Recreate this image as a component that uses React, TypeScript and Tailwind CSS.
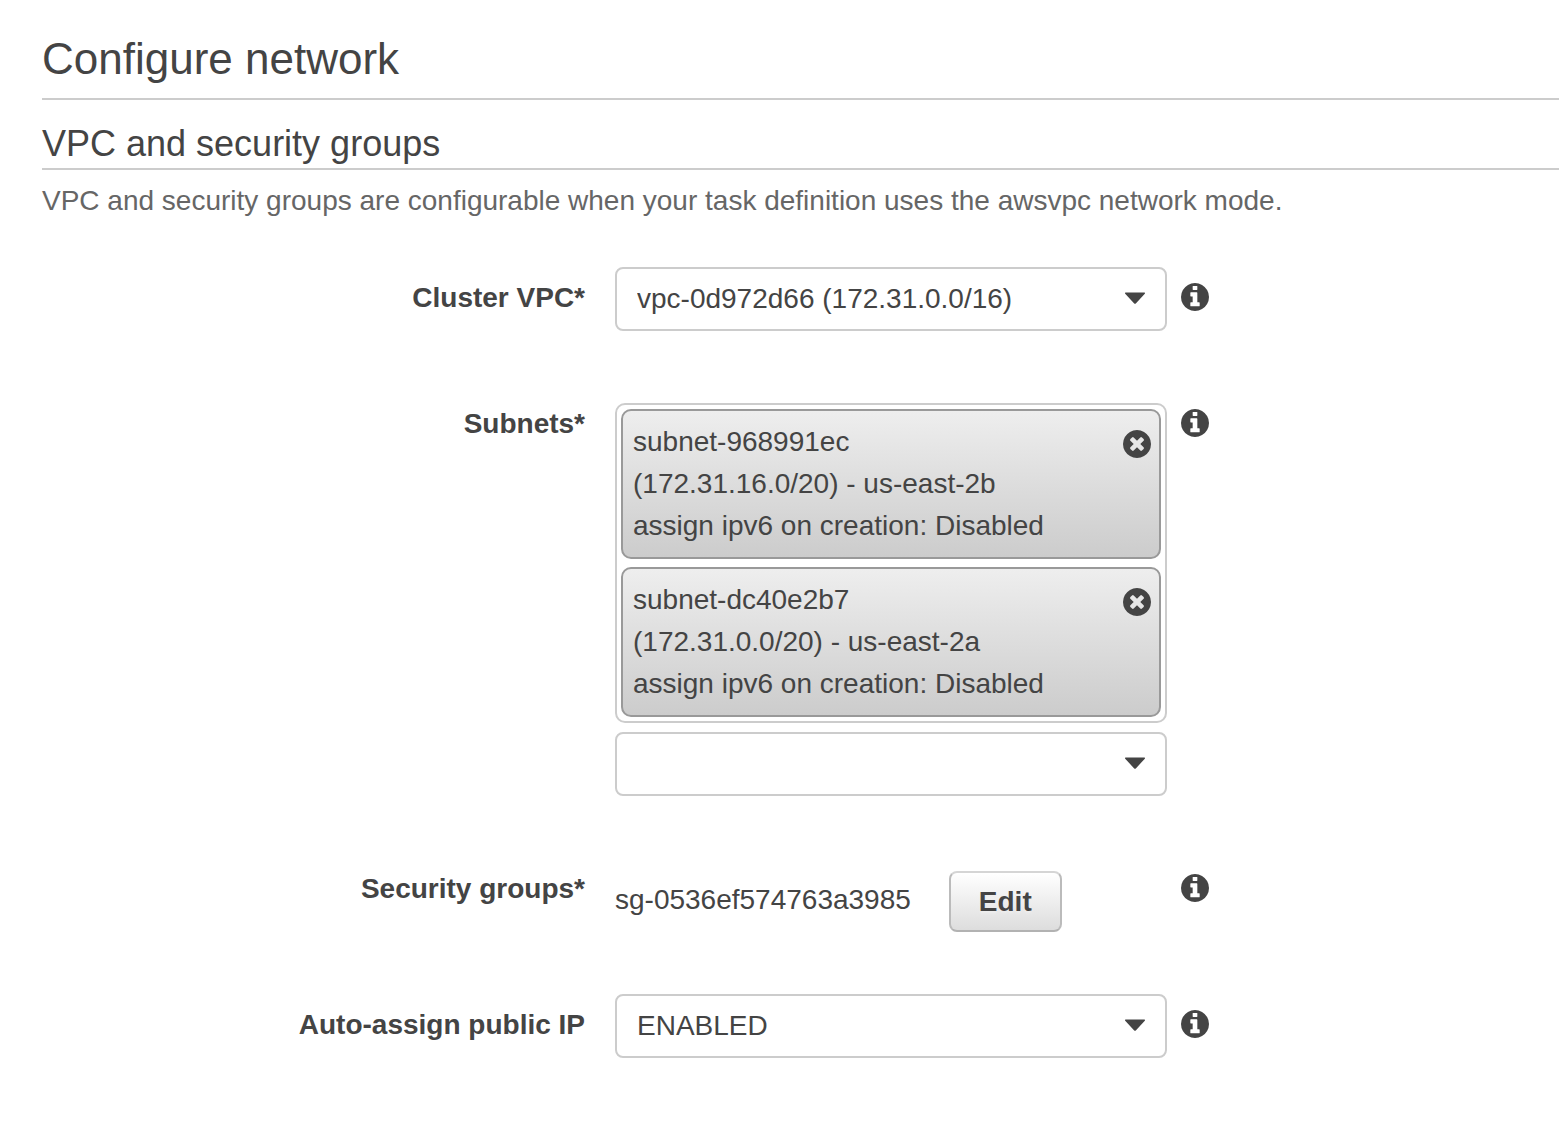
import { useState } from "react";
import type { ReactNode } from "react";

function InfoIcon() {
  return (
    <svg viewBox="128 128 1536 1536" className="block size-7" fill="currentColor" aria-hidden="true">
      <path d="M1152 1376v-160q0-14-9-23t-23-9h-96v-512q0-14-9-23t-23-9h-320q-14 0-23 9t-9 23v160q0 14 9 23t23 9h96v320h-96q-14 0-23 9t-9 23v160q0 14 9 23t23 9h448q14 0 23-9t9-23zm-128-896v-160q0-14-9-23t-23-9h-192q-14 0-23 9t-9 23v160q0 14 9 23t23 9h192q14 0 23-9t9-23zm640 416q0 209-103 385.5t-279.5 279.5-385.5 103-385.5-103-279.5-279.5-103-385.5 103-385.5 279.5-279.5 385.5-103 385.5 103 279.5 279.5 103 385.5z" />
    </svg>
  );
}

function RemoveIcon() {
  return (
    <svg viewBox="128 128 1536 1536" className="block size-7" fill="currentColor" aria-hidden="true">
      <path d="M1277 1122q0-26-19-45l-181-181 181-181q19-19 19-45 0-27-19-46l-90-90q-19-19-46-19-26 0-45 19l-181 181-181-181q-19-19-45-19-27 0-46 19l-90 90q-19 19-19 46 0 26 19 45l181 181-181 181q-19 19-19 45 0 27 19 46l90 90q19 19 46 19 26 0 45-19l181-181 181 181q19 19 45 19 27 0 46-19l90-90q19-19 19-46zm387-226q0 209-103 385.5t-279.5 279.5-385.5 103-385.5-103-279.5-279.5-103-385.5 103-385.5 279.5-279.5 385.5-103 385.5 103 279.5 279.5 103 385.5z" />
    </svg>
  );
}

function Select({ id, options }: { id: string; options: string[] }) {
  return (
    <div className="relative">
      <select
        id={id}
        className="block h-16 w-full appearance-none rounded-lg border-2 border-[#ccc] bg-white pr-14 pl-5 text-[28px] text-[#444]"
      >
        {options.map((o) => (
          <option key={o}>{o}</option>
        ))}
      </select>
      <svg
        viewBox="0 0 20 12"
        className="pointer-events-none absolute top-[25px] right-[22px] h-3 w-5"
        fill="currentColor"
        aria-hidden="true"
      >
        <path d="M.6 .4h18.8q1 .2 .4 1.3l-9 9.8q-.8 .6-1.6 0l-9-9.8q-.6-1.1 .4-1.3z" />
      </svg>
    </div>
  );
}

function Row({ label, htmlFor, children }: { label: string; htmlFor: string; children: ReactNode }) {
  return (
    <div className="grid grid-cols-[559fr_552fr_378fr] items-start gap-x-[14px]">
      <label htmlFor={htmlFor} className="pt-[10px] pr-4 text-right leading-[42px] font-bold">
        {label}
      </label>
      {children}
      <div className="pt-4">
        <button type="button" aria-label={`About ${label}`} className="block">
          <InfoIcon />
        </button>
      </div>
    </div>
  );
}

const SUBNETS = [
  { id: "subnet-968991ec", detail: "(172.31.16.0/20) - us-east-2b" },
  { id: "subnet-dc40e2b7", detail: "(172.31.0.0/20) - us-east-2a" },
];

export default function App() {
  const [subnets, setSubnets] = useState(SUBNETS);
  return (
    <main className="min-h-screen bg-white pt-[29px] pb-16 pl-[42px] font-['Liberation_Sans',Arial,sans-serif] text-[28px] text-[#444]">
      <h1 className="border-b-2 border-[#ccc] pb-[9px] text-[44px] leading-[60px]">Configure network</h1>
      <h2 className="mt-6 border-b-2 border-[#ccc] pb-1 text-[36px] leading-10">VPC and security groups</h2>
      <p className="mt-[10px] leading-[42px] text-[#666]">
        VPC and security groups are configurable when your task definition uses the awsvpc network mode.
      </p>

      <form className="mt-[45px] flex flex-col gap-[62px]">
        <Row label="Cluster VPC*" htmlFor="vpc">
          <Select id="vpc" options={["vpc-0d972d66 (172.31.0.0/16)"]} />
        </Row>

        <Row label="Subnets*" htmlFor="subnets">
          <div className="flex flex-col gap-[9px] pt-[10px]">
            <ul className="flex flex-col gap-2 rounded-[10px] border-2 border-[#ccc] p-1">
              {subnets.map((s) => (
                <li
                  key={s.id}
                  className="flex items-start justify-between rounded-[10px] border-2 border-[#999] bg-linear-to-b from-[#eee] to-[#ccc] py-[10px] pr-2 pl-[10px] leading-[42px]"
                >
                  <div>
                    <div>{s.id}</div>
                    <div>{s.detail}</div>
                    <div>assign ipv6 on creation: Disabled</div>
                  </div>
                  <button
                    type="button"
                    aria-label={`Remove ${s.id}`}
                    className="mt-[9px] block"
                    onClick={() => setSubnets(subnets.filter((x) => x.id !== s.id))}
                  >
                    <RemoveIcon />
                  </button>
                </li>
              ))}
            </ul>
            <Select id="subnets" options={[""]} />
          </div>
        </Row>

        <Row label="Security groups*" htmlFor="edit-groups">
          <div className="flex items-start gap-[38px] pt-[13px]">
            <span className="pt-2 leading-[42px]">sg-0536ef574763a3985</span>
            <button
              id="edit-groups"
              type="button"
              className="h-[61px] rounded-lg border-2 border-[#bbb] border-t-[#d5d5d5] border-b-[#b2b2b2] bg-linear-to-b from-white to-[#ddd] px-7 font-bold text-shadow-[0_2px_2px_#eee]"
            >
              Edit
            </button>
          </div>
        </Row>

        <Row label="Auto-assign public IP" htmlFor="public-ip">
          <Select id="public-ip" options={["ENABLED", "DISABLED"]} />
        </Row>
      </form>
    </main>
  );
}
